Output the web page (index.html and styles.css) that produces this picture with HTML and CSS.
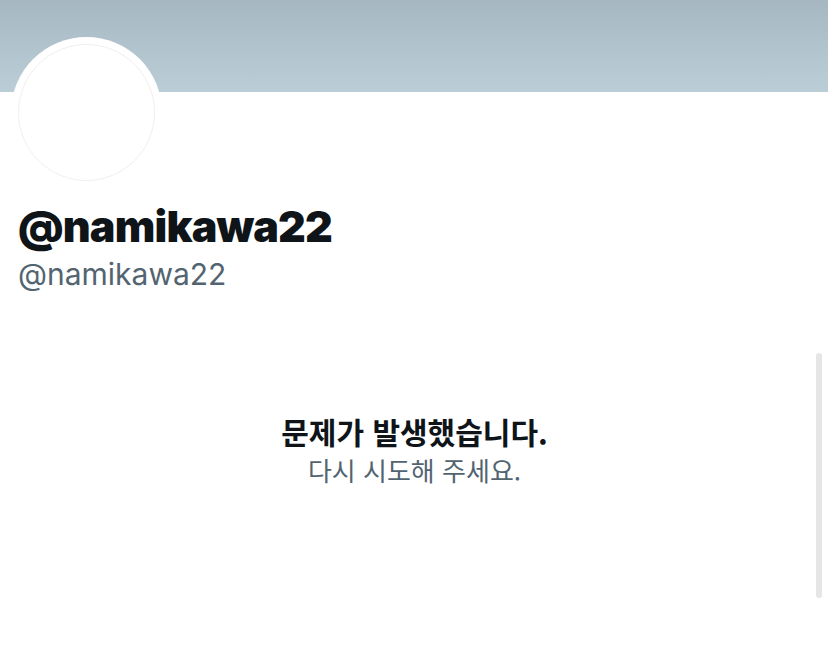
FILE: index.html
```html
<!DOCTYPE html>
<html lang="ko">
<head>
<meta charset="utf-8">
<link rel="stylesheet" href="styles.css">
</head>
<body>
<div class="page">
  <div class="banner"></div>
  <div class="profile">
    <div class="avatar"><div class="avatar-inner"></div></div>
    <h1 class="name">@namikawa22</h1>
    <div class="handle">@namikawa22</div>
  </div>
  <div class="error">
    <div class="error-title">문제가 발생했습니다.</div>
    <div class="error-sub">다시 시도해 주세요.</div>
  </div>
  <div class="scrollbar"></div>
</div>
</body>
</html>
```
FILE: styles.css
```css
html, body {
  margin: 0;
  padding: 0;
  background: #ffffff;
}
.page {
  position: relative;
  width: 828px;
  height: 657px;
  overflow: hidden;
  font-family: Inter, "Noto Sans CJK KR", sans-serif;
}
.banner {
  height: 92px;
  background: linear-gradient(to bottom, #a6b7c1, #bbced7);
}
.profile {
  padding-left: 11px;
}
.avatar {
  width: 137px;
  height: 137px;
  padding: 7px;
  margin-top: -55px;
  background: #fff;
  border-radius: 50%;
}
.avatar-inner {
  width: 135px;
  height: 135px;
  border: 1px solid #f1eeee;
  border-radius: 50%;
  background: #fff;
}
.name {
  margin: 12px 0 0 7px;
  font-size: 43px;
  font-weight: 900;
  line-height: 52px;
  color: #0f1419;
  letter-spacing: -0.8px;
}
.handle {
  margin: 4px 0 0 7px;
  font-size: 30px;
  font-weight: 400;
  line-height: 36px;
  color: #536471;
}
.error {
  margin-top: 120px;
  display: flex;
  flex-direction: column;
  align-items: center;
  font-family: "Noto Sans CJK KR", sans-serif;
  padding-left: 1px;
}
.error-title {
  font-size: 30px;
  font-weight: 700;
  line-height: 38px;
  color: #0f1419;
}
.error-sub {
  margin-top: 3px;
  font-size: 26px;
  font-weight: 400;
  line-height: 34px;
  color: #536471;
}
.scrollbar {
  position: absolute;
  left: 816px;
  top: 353px;
  width: 6px;
  height: 245px;
  border-radius: 3px;
  background: #e6e6e6;
}
```
